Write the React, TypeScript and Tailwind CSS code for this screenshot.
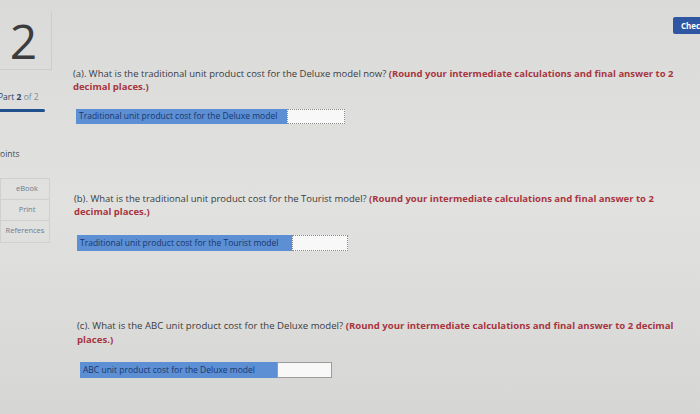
const font = { fontFamily: '"Open Sans", "Liberation Sans", sans-serif' };

type Q = {
  letter: string;
  lead: string;
  bold: string;
  tail: string;
  label: string;
  labelW: string;
  inputW: string;
  dotted: boolean;
  indent: string;
  text: string;
  gap: string;
  top: string;
};

const questions: Q[] = [
  {
    letter: "(a).",
    lead: "What is the traditional unit product cost for the Deluxe model now?",
    bold: "(Round your intermediate calculations and final answer to 2",
    tail: "decimal places.)",
    label: "Traditional unit product cost for the Deluxe model",
    labelW: "w-[211px]",
    inputW: "w-[58px]",
    dotted: true,
    indent: "ml-[21px]",
    text: "text-[9.5px] leading-[13px]",
    gap: "mt-[16px] h-[15px]",
    top: "mt-[33px]",
  },
  {
    letter: "(b).",
    lead: "What is the traditional unit product cost for the Tourist model?",
    bold: "(Round your intermediate calculations and final answer to 2",
    tail: "decimal places.)",
    label: "Traditional unit product cost for the Tourist model",
    labelW: "w-[215px]",
    inputW: "w-[56px]",
    dotted: true,
    indent: "ml-[22px]",
    text: "text-[9.5px] leading-[13px]",
    gap: "mt-[17px] h-[16px]",
    top: "mt-[68px]",
  },
  {
    letter: "(c).",
    lead: "What is the ABC unit product cost for the Deluxe model?",
    bold: "(Round your intermediate calculations and final answer to 2 decimal",
    tail: "places.)",
    label: "ABC unit product cost for the Deluxe model",
    labelW: "w-[197px]",
    inputW: "w-[55px]",
    dotted: false,
    indent: "ml-[25px]",
    text: "text-[9.6px] leading-[14px]",
    gap: "mt-[15px] h-[16px]",
    top: "mt-[68px]",
  },
];

function Question({ q }: { q: Q }) {
  return (
    <div className={`${q.top} ${q.indent}`}>
      <div className={`${q.text} text-[#3b3b3d]`}>
        <div className="whitespace-nowrap">
          {q.letter} {q.lead}{" "}
          <span className="font-bold text-[#a8353f]">{q.bold}</span>
        </div>
        <div className="whitespace-nowrap font-bold text-[#a8353f]">{q.tail}</div>
      </div>
      <div className={`${q.gap} ml-[3px] flex`}>
        <div
          className={`${q.labelW} flex items-center whitespace-nowrap bg-[#5c8fd4] px-[3px] text-[8.5px] text-[#1a366b]`}
        >
          {q.label}
        </div>
        <div
          className={`${q.inputW} bg-[#f7f8f7] ${
            q.dotted ? "border border-dotted border-[#8a8c8c]" : "border border-[#9a9c9c]"
          }`}
        />
      </div>
    </div>
  );
}

export default function App() {
  return (
    <div
      className="flex h-[414px] w-[700px] overflow-hidden bg-gradient-to-b from-[#dadbd9] via-[#e1e2e0] to-[#d6d7d5]"
      style={font}
    >
      <aside className="flex w-[52px] shrink-0 flex-col">
        <div className="mt-[12px] flex h-[58px] items-center justify-center border-r border-b border-[#cdcecc] pr-[4px]">
          <span className="text-[48px] font-normal leading-none text-[#3c3c3e]">2</span>
        </div>
        <div className="mt-[21px] -ml-[2px] whitespace-nowrap text-[8.5px] text-[#2d3f63]">
          Part <span className="font-bold">2</span> <span className="text-[#808a99]">of 2</span>
        </div>
        <div className="mt-[5px] h-[3px] w-[45px] rounded-r bg-[#21508f]" />
        <div className="mt-[36px] -ml-[5px] text-[8.5px] text-[#4a4c50]">Points</div>
        <div className="mt-[17px] mr-[2px] flex flex-col border border-[#d0d1cf] text-[7.5px] text-[#6d7a8e]">
          <div className="flex h-[21px] items-center justify-center border-b border-[#d0d1cf] pl-[4px]">
            eBook
          </div>
          <div className="flex h-[21px] items-center justify-center border-b border-[#d0d1cf] pl-[4px]">
            Print
          </div>
          <div className="flex h-[21px] items-center justify-center whitespace-nowrap">References</div>
        </div>
      </aside>
      <main className="flex flex-1 flex-col">
        <div className="flex justify-end pt-[17px]">
          <button className="-mr-[12px] h-[17px] w-[39px] rounded-[2px] bg-[#2f56a2] pl-[8px] text-left text-[8px] font-bold text-white">
            Check
          </button>
        </div>
        {questions.map((q) => (
          <Question key={q.letter} q={q} />
        ))}
      </main>
    </div>
  );
}
